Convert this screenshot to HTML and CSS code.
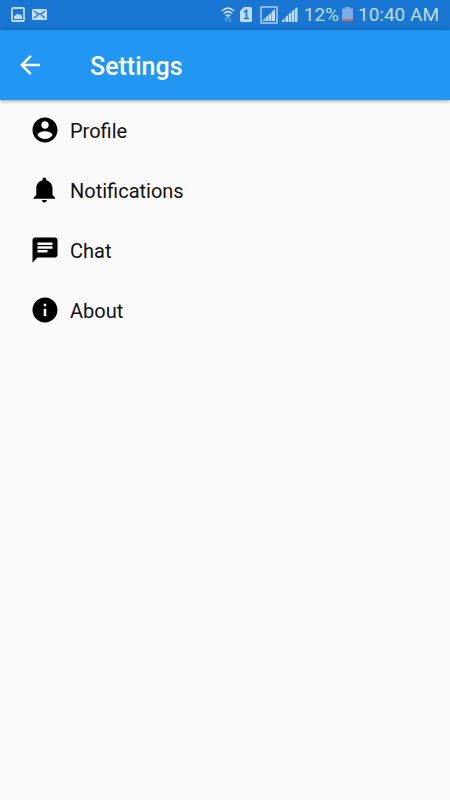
FILE: index.html
```html
<!DOCTYPE html>
<html lang="en">
<head>
<meta charset="utf-8">
<meta name="viewport" content="width=device-width, initial-scale=1">
<title>Settings</title>
<link rel="stylesheet" href="styles.css">
</head>
<body>
<div class="status">
  <div class="status-group status-left">
    <svg width="14" height="16" viewBox="0 0 14 16" aria-hidden="true"><rect x="1" y="1" width="12" height="13" rx="1" fill="none" stroke="currentColor" stroke-width="1.800"/><path d="M3 12V9l2-1 1.500-1.500L8.500 8l1-1L11 9v3z" fill="currentColor"/></svg>
    <svg width="15" height="14" viewBox="0 0 15 14" aria-hidden="true"><rect y="1" width="15" height="11" rx="1.500" fill="currentColor"/><path d="M2 3l4 3h3l4-3M2 10l4-3M13 10l-4-3" fill="none" stroke="#1976d2" stroke-width="1.300"/></svg>
  </div>
  <div class="status-group status-right">
    <svg width="14" height="16" viewBox="0 0 14 16" aria-hidden="true"><path d="M.8 4Q7-1.600 13.200 4M2.800 6.500Q7 2.800 11.200 6.500M4.700 9Q7 7 9.300 9" fill="none" stroke="currentColor" stroke-width="1.600"/><path d="M7 9l1.200 1.300L7 11.500l-1.200-1.200z" fill="currentColor"/><path d="M5 15V11M3.500 12.500L5 11 6.500 12.500M9 11v4M7.500 13.500L9 15l1.500-1.500" fill="none" stroke="#73a9e3"/></svg>
    <svg class="sim" width="12" height="16" viewBox="0 0 12 16" aria-hidden="true"><path d="M4 0h6.500Q12 0 12 1.500v12q0 1.500-1.500 1.500h-9Q0 15 0 13.500V4z" fill="currentColor"/><path d="M3.800 5L6.500 3.500V12M4 11.500h5" fill="none" stroke="#1976d2" stroke-width="1.700"/></svg>
    <svg class="boxed" width="18" height="18" viewBox="0 0 18 18" aria-hidden="true"><rect x="1" y="1" width="16" height="16" fill="none" stroke="currentColor" stroke-width="1.300"/><path d="M3 15v-1l2-2v3zM5.500 15v-3.500L8 9.500V15zM8.500 15V9L11 7v8zM11.500 15V6L15 3v12z" fill="currentColor"/></svg>
    <svg class="signal" width="16" height="18" viewBox="0 0 16 18" aria-hidden="true"><path d="M0 16v-1.500L2.500 12v4zM3.500 16v-5L6 9v7zM6.700 16V8l2.500-2v10zM9.800 16V5.500l2.400-2V16zM12.800 16V3L15.500 1v15z" fill="currentColor"/></svg>
    <span class="percent">12%</span>
    <svg class="battery" width="11" height="16" viewBox="0 0 11 16" aria-hidden="true"><path d="M3 0h5v1.500h3V12H0V1.500h3z" fill="#79aee6"/><path d="M0 12h11v2H0z" fill="#c96a5b"/></svg>
    <span>10:40 AM</span>
  </div>
</div>
<header class="appbar">
  <button class="back" type="button" aria-label="Back"><svg class="icon" viewBox="0 0 24 24" aria-hidden="true"><path d="M20 11H7.830l5.590-5.590L12 4l-8 8 8 8 1.410-1.410L7.830 13H20v-2z"/></svg></button>
  <h1 class="title">Settings</h1>
</header>
<main>
  <nav class="menu" aria-label="Settings">
    <a class="item" href="#profile"><svg class="icon" viewBox="0 0 24 24" aria-hidden="true"><path d="M12 2C6.480 2 2 6.480 2 12s4.480 10 10 10 10-4.480 10-10S17.520 2 12 2zm0 3c1.660 0 3 1.340 3 3s-1.340 3-3 3-3-1.340-3-3 1.340-3 3-3zm0 14.200c-2.500 0-4.710-1.280-6-3.220.030-1.990 4-3.080 6-3.080 1.990 0 5.970 1.090 6 3.080-1.290 1.940-3.500 3.220-6 3.220z"/></svg><span class="label">Profile</span></a>
    <a class="item" href="#notifications"><svg class="icon" viewBox="0 0 24 24" aria-hidden="true"><path d="M11.500 22c1.100 0 2-.9 2-2h-4c0 1.100.9 2 2 2zm6.500-6v-5.500c0-3.070-2.130-5.640-5-6.320V3.500c0-.83-.67-1.500-1.500-1.500S10 2.670 10 3.500v.68c-2.870.68-5 3.250-5 6.320V16l-2 2v1h17v-1l-2-2z"/></svg><span class="label">Notifications</span></a>
    <a class="item" href="#chat"><svg class="icon" viewBox="0 0 24 24" aria-hidden="true"><path d="M20 2H4c-1.100 0-1.990.9-1.990 2L2 22l4-4h14c1.100 0 2-.9 2-2V4c0-1.100-.9-2-2-2zM6 9h12v2H6V9zm8 5H6v-2h8v2zm4-6H6V6h12v2z"/></svg><span class="label">Chat</span></a>
    <a class="item" href="#about"><svg class="icon" viewBox="0 0 24 24" aria-hidden="true"><path d="M12 2C6.480 2 2 6.480 2 12s4.480 10 10 10 10-4.480 10-10S17.520 2 12 2zm1 15h-2v-6h2v6zm0-8h-2V7h2v2z"/></svg><span class="label">About</span></a>
  </nav>
</main>
</body>
</html>
```
FILE: styles.css
```css
* { box-sizing: border-box; }
body {
  margin: 0;
  min-height: 100vh;
  background: #fafafa;
  color: #111;
  font-family: Roboto, "Liberation Sans", sans-serif;
}
svg { display: block; flex: none; }
.status {
  display: flex;
  justify-content: space-between;
  align-items: center;
  height: 30px;
  padding: 0 11px;
  background: #1976d2;
  color: #c2dbf4;
  font-size: 19px;
  line-height: 22px;
}
.status-group { display: flex; align-items: center; }
.status-left { gap: 7px; }
.sim { margin-left: 5px; }
.boxed { margin-left: 8px; }
.signal { margin-left: 4px; }
.percent { margin-left: 6px; }
.battery { margin: 0 5px 0 3px; }
.appbar {
  display: flex;
  align-items: center;
  gap: 45px;
  height: 70px;
  padding: 0 15px;
  background: #2196f3;
  color: #fff;
  box-shadow: 0 1px 4px rgba(0, 0, 0, 0.4);
}
.back {
  padding: 0;
  border: 0;
  background: none;
  color: inherit;
}
.title {
  margin: 0;
  padding-top: 4px;
  font-size: 25px;
  font-weight: 500;
  line-height: 30px;
}
.icon {
  width: 30px;
  height: 30px;
  fill: currentColor;
}
.menu { display: flex; flex-direction: column; }
.item {
  display: flex;
  align-items: center;
  gap: 10px;
  height: 60px;
  padding: 0 30px;
  color: #111;
  font-size: 20px;
  line-height: 24px;
  text-decoration: none;
}
.item .icon { color: #000; }
.label { padding-top: 2px; }
```
